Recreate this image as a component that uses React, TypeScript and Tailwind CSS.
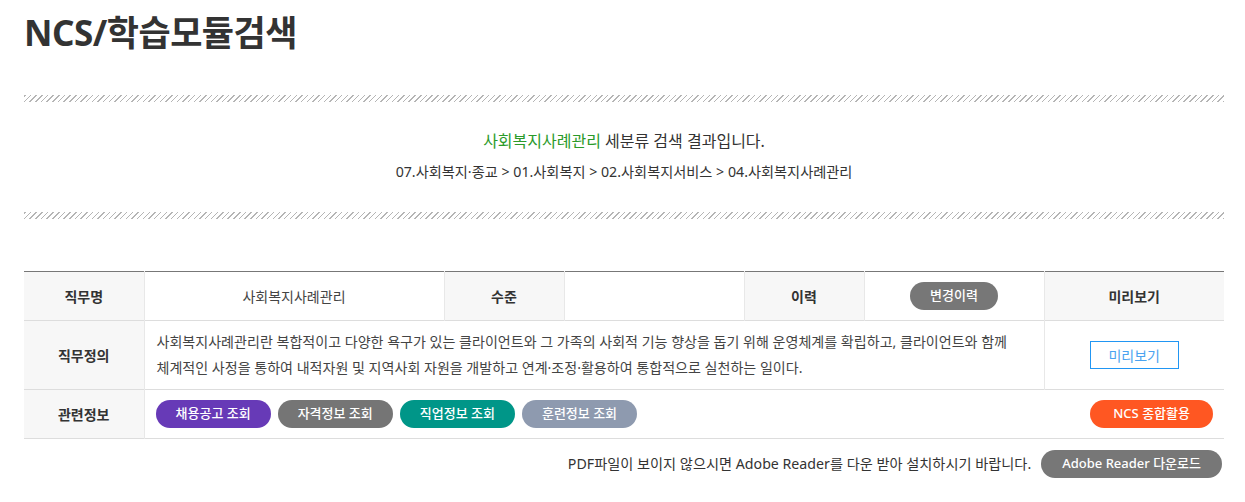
import React from 'react'

const font = { fontFamily: '"Noto Sans", "Noto Sans CJK KR", sans-serif' }

function Hatch() {
  return (
    <div className="h-[7px] w-full bg-[repeating-linear-gradient(-45deg,#b5b5b5_0px,#b5b5b5_1px,transparent_1px,transparent_4px)]" />
  )
}

function Pill({ color, wide, children }: { color: string; wide?: boolean; children: React.ReactNode }) {
  return (
    <span
      className={`inline-flex h-[28px] items-center rounded-full text-[13px] font-medium text-white ${wide ? 'px-[23px]' : 'px-[20px]'} ${color}`}
    >
      {children}
    </span>
  )
}

export default function App() {
  return (
    <div className="min-h-screen bg-white text-[#333]" style={font}>
      <div className="mx-[24px] w-[1200px]">
        <h1 className="pt-[11px] text-[35px] font-bold leading-[44px] tracking-[-0.5px] text-[#333]">
          NCS/학습모듈검색
        </h1>

        <div className="mt-[40px]">
          <Hatch />
        </div>

        {/* 검색 결과 */}
        <div className="flex flex-col items-center pt-[27px] pb-[28px]">
          <p className="text-[16px] leading-[24px] text-[#333]">
            <span className="text-[#2a9a2a]">사회복지사례관리</span> 세분류 검색 결과입니다.
          </p>
          <p className="mt-[7px] text-[14.2px] leading-[24px] text-[#333]">
            07.사회복지·종교 &gt; 01.사회복지 &gt; 02.사회복지서비스 &gt; 04.사회복지사례관리
          </p>
        </div>

        <Hatch />

        {/* 직무 정보 */}
        <table className="mt-[52px] w-full table-fixed border-collapse border-t border-t-[#777] text-[14px]">
          <colgroup>
            <col className="w-[120px]" />
            <col className="w-[300px]" />
            <col className="w-[120px]" />
            <col className="w-[180px]" />
            <col className="w-[120px]" />
            <col className="w-[180px]" />
            <col className="w-[180px]" />
          </colgroup>
          <tbody>
            <tr className="h-[49px] border-b border-[#ddd]">
              <th className="bg-[#f7f7f7] font-bold">직무명</th>
              <td className="border-l border-[#e8e8e8] text-center text-[#444]">사회복지사례관리</td>
              <th className="border-l border-[#e8e8e8] bg-[#f7f7f7] font-bold">수준</th>
              <td className="border-l border-[#e8e8e8]"></td>
              <th className="border-l border-[#e8e8e8] bg-[#f7f7f7] font-bold">이력</th>
              <td className="border-l border-[#e8e8e8] text-center">
                <span className="inline-flex h-[28px] items-center rounded-full bg-[#777] px-[20px] text-[13px] font-medium text-white">
                  변경이력
                </span>
              </td>
              <th className="border-l border-[#e8e8e8] bg-[#f7f7f7] font-bold">미리보기</th>
            </tr>
            <tr className="h-[69px] border-b border-[#ddd]">
              <th className="bg-[#f7f7f7] font-bold">직무정의</th>
              <td colSpan={5} className="border-l border-[#e8e8e8] px-[12px] text-[14.05px] leading-[26px] text-[#444]">
                사회복지사례관리란 복합적이고 다양한 욕구가 있는 클라이언트와 그 가족의 사회적 기능 향상을 돕기 위해 운영체계를 확립하고, 클라이언트와 함께
                <br />
                체계적인 사정을 통하여 내적자원 및 지역사회 자원을 개발하고 연계·조정·활용하여 통합적으로 실천하는 일이다.
              </td>
              <td className="border-l border-[#e8e8e8] text-center">
                <span className="inline-flex h-[28px] w-[89px] items-center justify-center border border-[#2196f3] text-[14px] text-[#4aa3f0]">
                  미리보기
                </span>
              </td>
            </tr>
            <tr className="h-[49px] border-b border-[#ddd]">
              <th className="bg-[#f7f7f7] font-bold">관련정보</th>
              <td colSpan={6} className="border-l border-[#e8e8e8] pl-[11px] pr-[11px]">
                <div className="flex items-center justify-between">
                  <div className="flex gap-[7px]">
                    <Pill color="bg-[#673ab7]">채용공고 조회</Pill>
                    <Pill color="bg-[#757575]">자격정보 조회</Pill>
                    <Pill color="bg-[#009688]">직업정보 조회</Pill>
                    <Pill color="bg-[#8e9aaf]">훈련정보 조회</Pill>
                  </div>
                  <Pill color="bg-[#ff5722]" wide>
                    NCS 종합활용
                  </Pill>
                </div>
              </td>
            </tr>
          </tbody>
        </table>

        <div className="mt-[11px] flex items-center justify-end gap-[10px] pr-[2px]">
          <p className="text-[14.2px] text-[#333]">
            PDF파일이 보이지 않으시면 Adobe Reader를 다운 받아 설치하시기 바랍니다.
          </p>
          <span className="inline-flex h-[28px] items-center rounded-full bg-[#777] px-[21px] text-[13px] font-medium text-white">
            Adobe Reader 다운로드
          </span>
        </div>
      </div>
    </div>
  )
}
